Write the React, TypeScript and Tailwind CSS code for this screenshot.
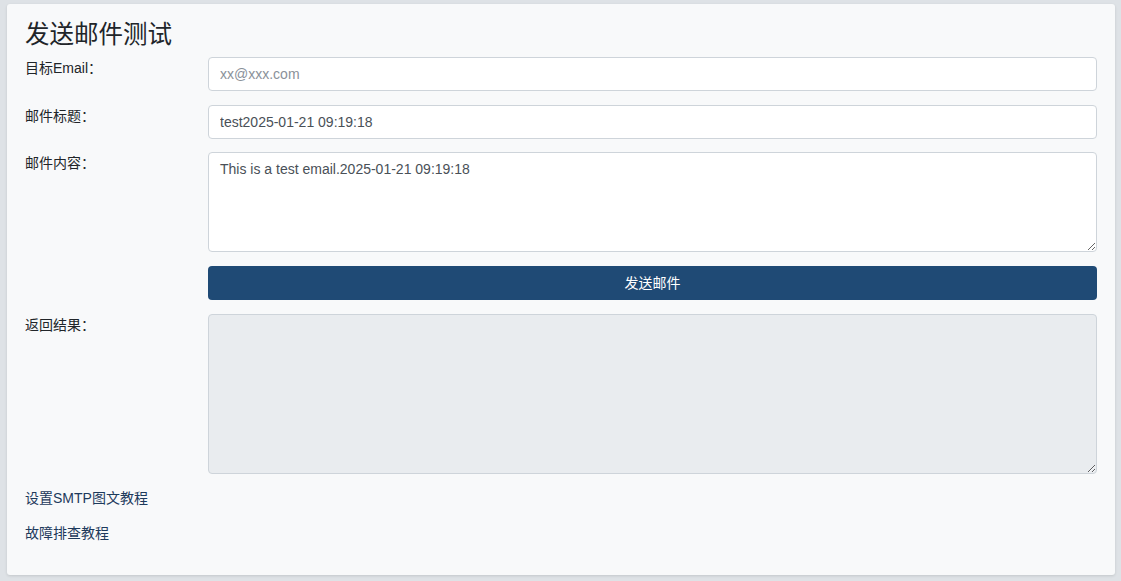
import React from 'react';

const FONT = { fontFamily: '"Liberation Sans", "Noto Sans CJK SC", sans-serif' };

const Row = ({ label, gap = 'mb-[14px]', children }: { label: string; gap?: string; children: React.ReactNode }) => (
  <div className={`flex ${gap}`}>
    <label className="w-[183px] shrink-0 text-[14px] leading-[20px] text-[#212529] pt-[1px]">{label}</label>
    <div className="flex-1">{children}</div>
  </div>
);

export default function App() {
  const now = '2025-01-21 09:19:18';
  return (
    <div className="min-h-[581px] bg-[#dee2e6] pt-[4px] pl-[7px] pr-[6px] pb-[6px]" style={FONT}>
      <div className="bg-[#f8f9fa] rounded-[3px] shadow-[0_1px_3px_rgba(0,0,0,0.12)] pl-[18px] pr-[18px] pt-[16px] pb-[32px]">
        <h1 className="text-[24.5px] leading-[29px] text-[#212529] mb-[8px]">发送邮件测试</h1>

        <Row label="目标Email：">
          <input
            className="w-full h-[34px] px-[11px] text-[14px] text-[#495057] placeholder:text-[#8a9199] bg-white border border-[#ced4da] rounded-[4px] outline-none"
            placeholder="xx@xxx.com"
          />
        </Row>

        <Row label="邮件标题：" gap="mb-[13px]">
          <input
            className="w-full h-[34px] px-[11px] text-[14px] text-[#495057] bg-white border border-[#ced4da] rounded-[4px] outline-none"
            defaultValue={`test${now}`}
          />
        </Row>

        <Row label="邮件内容：">
          <textarea
            className="block w-full h-[100px] px-[11px] py-[6px] text-[14px] leading-[20px] text-[#495057] bg-white border border-[#ced4da] rounded-[4px] outline-none"
            defaultValue={`This is a test email.${now}`}
          />
        </Row>

        <div className="flex mb-[14px]">
          <div className="w-[183px] shrink-0" />
          <button className="flex-1 h-[34px] bg-[#1f4a75] text-white text-[14px] rounded-[4px]">发送邮件</button>
        </div>

        <Row label="返回结果：">
          <textarea
            readOnly
            className="block w-full h-[160px] px-[11px] py-[6px] text-[14px] text-[#495057] bg-[#e9ecef] border border-[#ced4da] rounded-[4px] outline-none"
          />
        </Row>

        <div className="text-[14px] leading-[20px] text-[#1d3a5c]">
          <a className="block mb-[15px] cursor-pointer">设置SMTP图文教程</a>
          <a className="block cursor-pointer">故障排查教程</a>
        </div>
      </div>
    </div>
  );
}
